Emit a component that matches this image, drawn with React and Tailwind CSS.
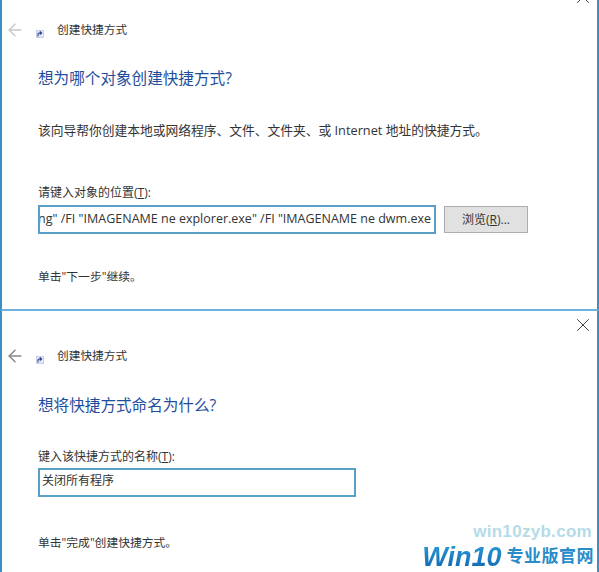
import { ArrowLeft, X } from "lucide-react";

const FONT = "font-['Open_Sans','Noto_Sans_CJK_SC',sans-serif]";

function ShortcutIcon() {
  return (
    <svg width="8" height="8" viewBox="0 0 8 8" className="mt-[7px] shrink-0">
      <rect x="0.5" y="0.5" width="7" height="7" fill="#e4e8f4" stroke="#c9d0e6" />
      <path d="M2 6.5 V4 Q2 3 3.2 3 H5 M3.8 1.5 L5.6 3 L3.8 4.5" fill="none" stroke="#2b3f8f" strokeWidth="1.1" />
    </svg>
  );
}

function Header({ arrowColor }) {
  return (
    <div className="flex h-5 items-center">
      <ArrowLeft size={20} strokeWidth={1.8} className={`ml-[3px] shrink-0 ${arrowColor}`} />
      <div className="ml-[11px]">
        <ShortcutIcon />
      </div>
      <span className="ml-[13px] text-[11.7px] text-[#333]">创建快捷方式</span>
    </div>
  );
}

function Panel({ children, className }) {
  return (
    <section className={`relative border-x-2 border-x-[#3b8fc4] bg-white ${className}`}>
      {children}
    </section>
  );
}

export default function App() {
  return (
    <div className={`relative h-[572px] w-[599px] overflow-hidden bg-white ${FONT}`}>
      {/* first wizard page */}
      <Panel className="h-[311px] border-b-2 border-b-[#6db1de] pt-[20px]">
        <X size={22} strokeWidth={1} className="absolute right-[3px] top-[-14px] text-[#333]" />
        <Header arrowColor="text-[#c8c8c8]" />
        <div className="pl-[36px]">
          <h2 className="mt-[27px] text-[15.6px] leading-[22px] text-[#1f4e9c]">想为哪个对象创建快捷方式?</h2>
          <p className="mt-[32px] text-[12.75px] leading-[18px] text-[#333]">
            该向导帮你创建本地或网络程序、文件、文件夹、或 Internet 地址的快捷方式。
          </p>
          <label className="mt-[45px] block text-[12px] leading-[18px] text-[#333]">
            请键入对象的位置(<span className="underline">T</span>):
          </label>
          <div className="mt-[3px] flex items-center gap-[8px]">
            <div className="flex h-[29px] w-[398px] items-center justify-end overflow-hidden border-2 border-[#5a9fc6] bg-white pr-[3px]">
              <span className="whitespace-nowrap text-[12.5px] text-[#333]">
                ng" /FI "IMAGENAME ne explorer.exe" /FI "IMAGENAME ne dwm.exe
              </span>
            </div>
            <button className="h-[27px] w-[84px] border border-[#adadad] bg-[#e1e1e1] text-[12px] text-[#333]">
              浏览(<span className="underline">R</span>)...
            </button>
          </div>
          <p className="mt-[33px] text-[11.8px] leading-[18px] text-[#333]">单击"下一步"继续。</p>
        </div>
      </Panel>

      {/* second wizard page */}
      <Panel className="h-[261px] pt-[35px]">
        <X size={22} strokeWidth={1} className="absolute right-[3px] top-[3px] text-[#333]" />
        <Header arrowColor="text-[#888]" />
        <div className="pl-[36px]">
          <h2 className="mt-[28px] text-[15.6px] leading-[22px] text-[#1f4e9c]">想将快捷方式命名为什么?</h2>
          <label className="mt-[32px] block text-[12px] leading-[18px] text-[#333]">
            键入该快捷方式的名称(<span className="underline">T</span>):
          </label>
          <div className="mt-[2px] flex h-[29px] w-[318px] items-center border-2 border-[#5a9fc6] bg-white pb-[3px] pl-[2px]">
            <span className="text-[12px] text-[#333]">关闭所有程序</span>
          </div>
          <p className="mt-[36px] text-[11.8px] leading-[18px] text-[#333]">单击"完成"创建快捷方式。</p>
        </div>
      </Panel>

      {/* site watermark */}
      <div className="absolute bottom-[2px] right-[5px] flex flex-col items-end font-['Liberation_Sans','Noto_Sans_CJK_SC',sans-serif]">
        <span className="mr-[2px] text-[17px] font-bold leading-[18px] tracking-[0.3px] text-[#b5dbe8]">win10zyb.com</span>
        <div className="mt-[3px] flex items-center gap-[2px]">
          <span className="bg-gradient-to-b from-[#2a9ad8] to-[#1267b0] bg-clip-text pr-[3px] text-[27px] font-bold italic leading-[26px] text-transparent">
            Win10
          </span>
          <span className="text-[17px] font-bold leading-[22px] tracking-[0.5px] text-[#2a8bc9]">专业版官网</span>
        </div>
      </div>
    </div>
  );
}
